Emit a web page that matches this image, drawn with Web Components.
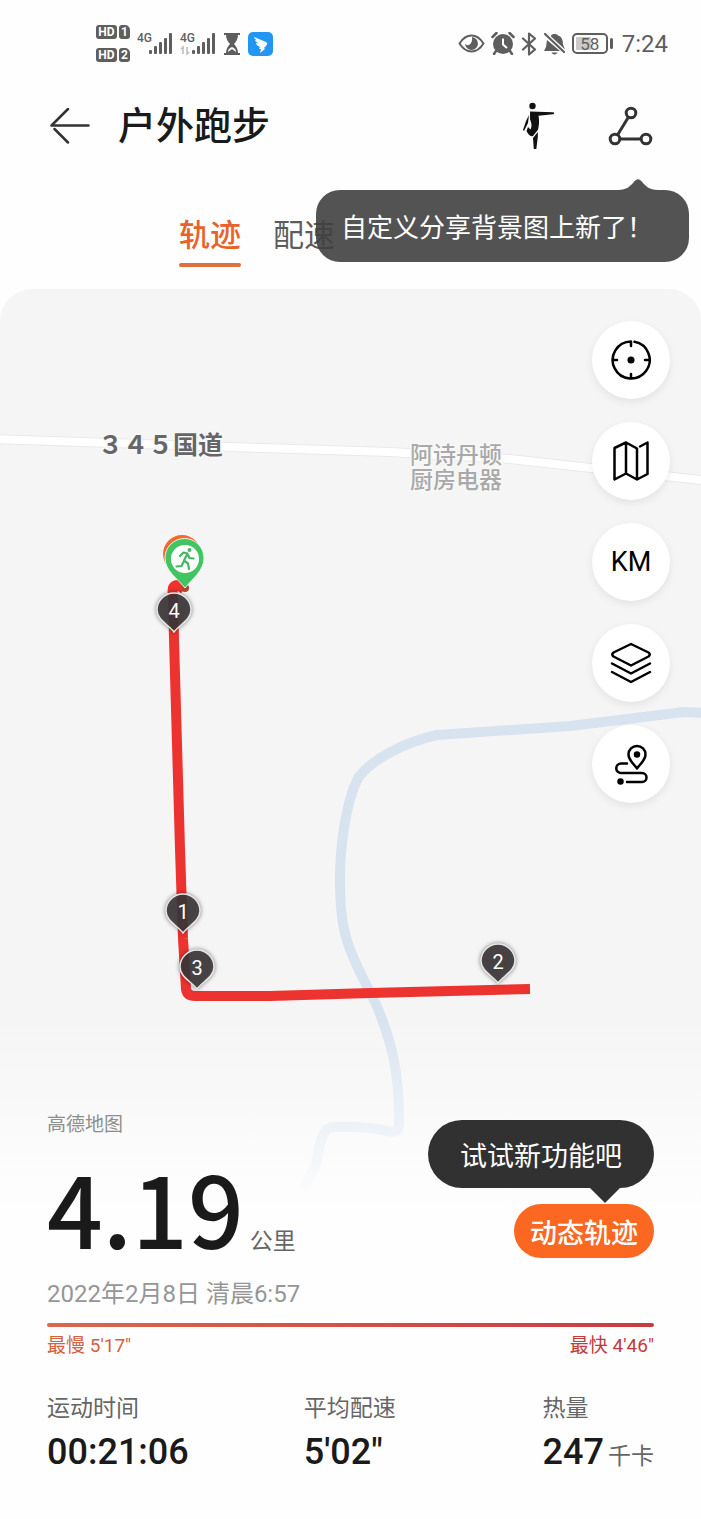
<!DOCTYPE html>
<html lang="zh-CN">
<head>
<meta charset="utf-8">
<meta name="viewport" content="width=device-width, initial-scale=1">
<title>户外跑步</title>
<style>
  body {
    margin: 0;
    background: #fefefe;
    color: #1a1a1a;
    font-family: Roboto, "Noto Sans CJK SC", sans-serif;
  }
</style>
</head>
<body>

<run-page>
  <status-bar slot="status" time="7:24" battery="58"></status-bar>
  <page-header slot="header">
    户外跑步
    <hint-bubble slot="hint">自定义分享背景图上新了&#xFF01;</hint-bubble>
  </page-header>
  <tab-bar slot="tabs" tabs="轨迹,配速" active="轨迹"></tab-bar>
  <track-map slot="map">
    <map-pin label="1" style="--x:183px; --y:644px"></map-pin>
    <map-pin label="2" style="--x:498px; --y:694px"></map-pin>
    <map-pin label="3" style="--x:197px; --y:700px"></map-pin>
    <map-pin label="4" style="--x:174px; --y:343px"></map-pin>
  </track-map>
  <map-tools slot="tools"></map-tools>
  <run-summary slot="summary">
    <span slot="source">高德地图</span>
    <span slot="distance">4.19</span>
    <span slot="unit">公里</span>
    <span slot="date">2022年2月8日 清晨6:57</span>
    <span slot="slow">最慢 5'17"</span>
    <span slot="fast">最快 4'46"</span>
    <run-stat slot="stats" label="运动时间" value="00:21:06"></run-stat>
    <run-stat slot="stats" label="平均配速" value="5'02&quot;"></run-stat>
    <run-stat slot="stats" label="热量" value="247" unit="千卡"></run-stat>
  </run-summary>
</run-page>

<script>
class RunPage extends HTMLElement {
  constructor() {
    super();
    this.attachShadow({mode: 'open'}).innerHTML = `
      <style>
        :host { display: block; }
        .stage {
          display: grid;
          grid-template-columns: minmax(0, 1fr);
          margin-top: 17px;
        }
        .map, .content { grid-area: 1 / 1; }
        .content {
          position: relative;
          display: flex;
          flex-direction: column;
          gap: 306px;
          padding: 32px 0 47px;
        }
      </style>
      <slot name="status"></slot>
      <slot name="header"></slot>
      <slot name="tabs"></slot>
      <main class="stage">
        <div class="map"><slot name="map"></slot></div>
        <div class="content">
          <slot name="tools"></slot>
          <slot name="summary"></slot>
        </div>
      </main>`;
  }
}

class StatusBar extends HTMLElement {
  constructor() {
    super();
    const signal = `
      <rect x="12" y="18" width="3" height="4" rx="1"/>
      <rect x="17" y="14" width="3" height="8" rx="1"/>
      <rect x="22" y="10" width="3" height="12" rx="1"/>
      <rect x="27" y="6" width="3" height="16" rx="1"/>
      <rect x="32" y="1" width="3" height="21" rx="1"/>`;
    this.attachShadow({mode: 'open'}).innerHTML = `
      <style>
        :host {
          display: flex;
          align-items: center;
          justify-content: space-between;
          height: 87px;
          padding: 0 33px 0 96px;
          color: #5e5e5e;
        }
        .group { display: flex; align-items: center; gap: 7px; }
        .right { gap: 6px; }
        .sims { display: grid; grid-template-columns: 21px 11px; gap: 9px 2px; }
        .sims span {
          height: 14px;
          border-radius: 3px;
          background: #5e5e5e;
          color: #fff;
          font: bold 12px/14px Roboto, sans-serif;
          text-align: center;
        }
        .sims .sim { border-radius: 3px 5px 3px 3px; }
        svg { display: block; fill: currentColor; }
        text { font: 500 12px Roboto, sans-serif; }
        .battery { display: flex; align-items: center; gap: 2px; }
        .cell {
          box-sizing: border-box;
          width: 36px;
          height: 21px;
          border: 2px solid #5e5e5e;
          border-radius: 5px;
          background: linear-gradient(90deg, #c9c9c9 55%, #fff 55%) content-box;
          padding: 2px;
          font-size: 17px;
          line-height: 14px;
          text-align: center;
        }
        .nub { width: 3px; height: 11px; border-radius: 2px; background: #5e5e5e; }
        time { font-size: 24px; line-height: 28px; margin-left: 3px; }
      </style>
      <div class="group">
        <div class="sims">
          <span>HD</span><span class="sim">1</span>
          <span>HD</span><span class="sim">2</span>
        </div>
        <svg width="36" height="24" viewBox="0 0 36 24"><text x="0" y="10">4G</text>${signal}</svg>
        <svg width="36" height="24" viewBox="0 0 36 24"><text x="0" y="10">4G</text>${signal}
          <path d="M3 22v-7l-2 2M7 15v7l2-2" fill="none" stroke="#bbb" stroke-width="1.5"/></svg>
        <svg width="18" height="22" viewBox="0 0 18 22">
          <path d="M1 0h16v2h-2c0 4-2 7-4 9 2 2 4 5 4 9h2v2H1v-2h2c0-4 2-7 4-9-2-2-4-5-4-9H1z"/>
          <path d="M5 19c0-3 2-4 4-5 2 1 4 2 4 5l-4-3z" fill="#fff"/></svg>
        <svg width="25" height="24" viewBox="0 0 25 24">
          <rect width="25" height="24" rx="5" fill="#2196f3"/>
          <path d="M6 5l12 5c2 1 1 3 0 4l-2 2 1 1-5 4 1-4h-2l1-2c-3-1-4-3-4-4l3 .5C8 10 7 9 7 8l2 .5C7 7 6 6 6 5z" fill="#fff"/></svg>
      </div>
      <div class="group right">
        <svg width="27" height="19" viewBox="0 0 27 19">
          <path d="M1.500 9.500C5 4 9 1.500 13.500 1.500S22 4 25.500 9.500C22 15 18 17.500 13.500 17.500S5 15 1.500 9.500z" fill="none" stroke="currentColor" stroke-width="2"/>
          <path d="M14 3a6.500 6.500 0 1 1-7 7c3 3 8 0 7-7z"/></svg>
        <svg width="24" height="23" viewBox="0 0 24 23">
          <circle cx="12" cy="12" r="10"/>
          <path d="M1.500 5l4-4M22.500 5l-4-4M5 19l-2 3M19 19l2 3" stroke="currentColor" stroke-width="2.500" stroke-linecap="round"/>
          <path d="M12 6.500v6l4 3.500" fill="none" stroke="#fff" stroke-width="2"/></svg>
        <svg width="16" height="24" viewBox="0 0 16 24">
          <path d="M2 6.500l12 11-6 5V1.500l6 5-12 11" fill="none" stroke="currentColor" stroke-width="2.200" stroke-linejoin="round" stroke-linecap="round"/></svg>
        <svg width="23" height="24" viewBox="0 0 23 24">
          <path d="M8 3.500c1-2 6-2 7 0 4 1 5 5 5 9l2 5-14-13zM4 8l13 11H1l2-4zM8.500 20.500h6c-1 2.500-5 2.500-6 0z"/>
          <path d="M2 2l19 18" stroke="currentColor" stroke-width="2.200" stroke-linecap="round"/></svg>
        <div class="battery"><div class="cell">${this.getAttribute('battery')}</div><div class="nub"></div></div>
        <time>${this.getAttribute('time')}</time>
      </div>`;
  }
}

class PageHeader extends HTMLElement {
  constructor() {
    super();
    this.attachShadow({mode: 'open'}).innerHTML = `
      <style>
        :host {
          position: relative;
          display: flex;
          align-items: center;
          height: 78px;
          padding: 0 48px 0 50px;
        }
        h1 {
          flex: 1;
          margin: 0 0 0 28px;
          font-size: 38px;
          font-weight: 500;
          line-height: 48px;
        }
        button { display: block; padding: 0; border: 0; background: none; color: inherit; }
        .share { margin-left: 54px; }
        svg { display: block; }
        .hint {
          position: absolute;
          z-index: 1;
          top: 103px;
          right: 12px;
        }
      </style>
      <button aria-label="返回">
        <svg width="40" height="36" viewBox="0 0 40 36" fill="none" stroke="#333" stroke-width="2.500" stroke-linecap="round" stroke-linejoin="round">
          <path d="M18 1L1.500 17.500H38.500M4.500 21L18 34.500"/></svg>
      </button>
      <h1><slot></slot></h1>
      <button aria-label="动作">
        <svg width="32" height="48" viewBox="0 0 32 48" fill="#111">
          <circle cx="10.500" cy="4" r="3.200"/>
          <path d="M8 9.500l23 .8c1.500 0 1.500 1.900 0 2l-14.500 1.400c1 5 .5 10-.5 14L11 34c-3 1-5-2-6.500-5l1.500-4 2.500 2.500c2-4 .5-7-.5-10.500z"/>
          <path d="M7 13l-1 8-4 8-1-1 3-9z"/>
          <path d="M15.800 30v5l-1.500 12h-2.500l-.8-11z"/></svg>
      </button>
      <button class="share" aria-label="分享">
        <svg width="45" height="40" viewBox="0 0 45 40" fill="none" stroke="#333" stroke-width="3">
          <circle cx="23" cy="7" r="4.800"/><circle cx="7" cy="33" r="4.800"/><circle cx="38" cy="33" r="4.800"/>
          <path d="M20.500 11L9.500 29M12 33h21"/></svg>
      </button>
      <div class="hint"><slot name="hint"></slot></div>`;
  }
}

class HintBubble extends HTMLElement {
  constructor() {
    super();
    this.attachShadow({mode: 'open'}).innerHTML = `
      <style>
        :host {
          position: relative;
          display: block;
          padding: 20px 36px 16px 25px;
          border-radius: 24px;
          background: rgba(64, 64, 64, .9);
          color: #fff;
          font-size: 26px;
          line-height: 36px;
          white-space: nowrap;
        }
        svg { position: absolute; right: 31px; bottom: 100%; }
      </style>
      <svg width="40" height="11" viewBox="0 0 40 11" fill="#535353">
        <path d="M0 11c9 0 12-4 15-7 4-5 6-5 10 0 3 3 6 7 15 7z"/></svg>
      <slot></slot>`;
  }
}

class TabBar extends HTMLElement {
  constructor() {
    super();
    const active = this.getAttribute('active');
    const tabs = this.getAttribute('tabs').split(',').map(name => `
      <button role="tab" aria-selected="${name === active}">${name}</button>`).join('');
    this.attachShadow({mode: 'open'}).innerHTML = `
      <style>
        :host {
          display: flex;
          gap: 32px;
          padding: 48px 0 0 179px;
        }
        button {
          padding: 0 0 5px;
          border: 0;
          background: none;
          color: #5c5c5c;
          font: 400 31px/46px Roboto, "Noto Sans CJK SC", sans-serif;
        }
        button::after {
          content: "";
          display: block;
          height: 4px;
          margin-top: 4px;
          border-radius: 2px;
        }
        [aria-selected=true] { color: #e8622a; font-weight: 500; }
        [aria-selected=true]::after { background: #e2703a; }
      </style>
      ${tabs}`;
  }
}

class TrackMap extends HTMLElement {
  constructor() {
    super();
    this.attachShadow({mode: 'open'}).innerHTML = `
      <style>
        :host {
          position: relative;
          display: block;
          height: 920px;
          overflow: hidden;
          border-radius: 32px 32px 0 0;
          background: #f6f5f6;
        }
        svg { display: block; width: 100%; height: 100%; }
        .fade {
          position: absolute;
          inset: 730px 0 0;
          background: linear-gradient(rgba(254, 254, 254, 0), rgba(254, 254, 254, .6) 60%, #fefefe);
        }
        .road, .place { font-family: Roboto, "Noto Sans CJK SC", sans-serif; stroke: #f8f8f8; stroke-width: 3px; paint-order: stroke; }
        .road { font-size: 25px; font-weight: 700; fill: #666; }
        .place { font-size: 23px; font-weight: 500; fill: #a9a9a9; }
      </style>
      <svg viewBox="0 0 701 920" preserveAspectRatio="xMinYMin slice" fill="none">
        <!-- road -->
        <path d="M-5 150L200 157 390 163 510 170 600 180 710 192" stroke="#e9e9e9" stroke-width="10"/>
        <path d="M-5 150L200 157 390 163 510 170 600 180 710 192" stroke="#fff" stroke-width="8"/>
        <!-- river -->
        <path d="M710 424L684 423 570 437 437 446C405 453 372 470 358 489 345 515 340 560 340 590 340 615 342 635 346 648 353 675 370 700 378 720 390 750 400 780 399 838Q398 843 390 843 370 837 332 838 324 840 321 852L315 878 303 900" stroke="#d8e3f0" stroke-width="10" stroke-linejoin="round"/>
        <text class="road" x="98" y="165">&#xFF13;&#xFF14;&#xFF15;国道</text>
        <text class="place" x="410" y="174">阿诗丹顿</text>
        <text class="place" x="410" y="199">厨房电器</text>
        <!-- track -->
        <path d="M184 300L178 296Q171 296 173 305L174 350 180 560 183 650 186 700Q187 707 195 707L270 707 370 704 530 700" stroke="#ec332f" stroke-width="10" stroke-linejoin="round"/>
        <circle cx="185" cy="299" r="4" fill="#b8442c"/>
        <!-- finish and start -->
        <path d="M182 294C175 286 163 277 163 265a19 19 0 0 1 38 0C201 277 189 286 182 294z" fill="#f3692f"/>
        <path d="M185 299C178 290 165 282 165 269a19.500 19.500 0 0 1 39 0C204 282 192 290 185 299z" fill="#43c462" stroke="#e9f6ec" stroke-width="1"/>
        <circle cx="185" cy="270" r="14" fill="#fff"/>
        <circle cx="189.500" cy="261" r="2" fill="#43b861"/>
        <path d="M180 267l3.500-3.500 4 1-3.500 7 4 3 1 5.500M184 272l-2.500 5-5 .5M187.500 265l2 4 4 .5" stroke="#43b861" stroke-width="2.200" stroke-linecap="round" stroke-linejoin="round"/>
      </svg>
      <slot></slot>
      <div class="fade"></div>`;
  }
}

/* --x / --y is the point on the map the tip stands on */
class MapPin extends HTMLElement {
  constructor() {
    super();
    this.attachShadow({mode: 'open'}).innerHTML = `
      <style>
        :host {
          position: absolute;
          left: calc(var(--x) - 20px);
          top: calc(var(--y) - 42px);
          display: grid;
          width: 40px;
          height: 46px;
        }
        svg, span { grid-area: 1 / 1; }
        svg { filter: drop-shadow(0 0 2px rgba(0, 0, 0, .5)); }
        span { color: #fff; font-size: 20px; line-height: 42px; text-align: center; z-index: 1; }
      </style>
      <svg width="40" height="46" viewBox="0 0 40 46">
        <path d="M20 42C15 35 3 30 3 20a17 17 0 0 1 34 0C37 30 25 35 20 42z" fill="#3c3839" fill-opacity=".88" stroke="#e8e8e8" stroke-width="1.500"/></svg>
      <span>${this.getAttribute('label')}</span>`;
  }
}

class MapTools extends HTMLElement {
  constructor() {
    super();
    this.attachShadow({mode: 'open'}).innerHTML = `
      <style>
        :host {
          display: flex;
          flex-direction: column;
          align-items: flex-end;
          gap: 23px;
          padding-right: 31px;
        }
        button {
          display: grid;
          place-items: center;
          width: 78px;
          height: 78px;
          padding: 0;
          border: 0;
          border-radius: 50%;
          background: #fff;
          box-shadow: 0 3px 8px rgba(0, 0, 0, .08);
          color: #000;
          font: 400 27px/32px Roboto, sans-serif;
        }
        svg {
          fill: none;
          stroke: #000;
          stroke-width: 2.500;
          stroke-linecap: round;
          stroke-linejoin: round;
        }
      </style>
      <button aria-label="定位">
        <svg width="40" height="40" viewBox="0 0 40 40">
          <path d="M23.500 1.800A18.500 18.500 0 1 1 20 1.500V6M20 34v4M2 20h4M34 20h4"/>
          <circle cx="20" cy="20" r="2.300" fill="#000"/></svg>
      </button>
      <button aria-label="地图类型">
        <svg width="40" height="42" viewBox="0 0 40 42">
          <path d="M3.500 8L15 2.500 26 8.500V39.500L15 33.500 3.500 39.500zM15 2.500v31M26 39.500L36.500 34V2.500L29 6.500"/></svg>
      </button>
      <button>KM</button>
      <button aria-label="图层">
        <svg width="42" height="42" viewBox="0 0 42 42">
          <path d="M21 2L38.500 10.500Q41 12.500 38.500 14.500L21 23.500 3.500 14.500Q1 12.500 3.500 10.500zM2 21.500l19 10 19-10M2 30l19 10 19-10"/></svg>
      </button>
      <button aria-label="轨迹">
        <svg width="36" height="42" viewBox="0 0 36 42">
          <path d="M24 25.500C20 20 15.500 17 15.500 11.500a8.500 8.500 0 0 1 17 0C32.500 17 28 20 24 25.500zM14 20.500H8a4.500 4.500 0 0 0 0 9.500h21a4.500 4.500 0 0 1 0 9H14"/>
          <circle cx="24" cy="11.500" r="2" fill="#000"/><circle cx="7.500" cy="38.500" r="2" fill="#000"/></svg>
      </button>`;
  }
}

class RunSummary extends HTMLElement {
  constructor() {
    super();
    this.attachShadow({mode: 'open'}).innerHTML = `
      <style>
        :host { display: block; padding: 0 47px; }
        .top { display: flex; justify-content: space-between; }
        .source { color: #8e8e8e; font-size: 19px; line-height: 32px; }
        .distance {
          display: flex;
          align-items: baseline;
          gap: 6px;
          height: 104px;
          margin-top: 13px;
          line-height: 104px;
        }
        .distance strong { font-family: "Noto Sans CJK SC", sans-serif; font-size: 98px; font-weight: 500; }
        .distance span { color: #666; font-size: 23px; }
        .date { margin-top: 22px; color: #969696; font-size: 24px; line-height: 28px; }
        .action {
          display: flex;
          flex-direction: column;
          align-items: flex-end;
          gap: 16px;
          padding-top: 11px;
        }
        .tip, button {
          border: 0;
          color: #fff;
          font: 400 27px/38px Roboto, "Noto Sans CJK SC", sans-serif;
        }
        .tip {
          position: relative;
          padding: 18px 32px 12px;
          border-radius: 34px;
          background: #323132;
        }
        .tip::after {
          content: "";
          position: absolute;
          top: 100%;
          right: 34px;
          border: solid transparent;
          border-width: 15px 15px 0;
          border-top-color: #323132;
        }
        button { padding: 11px 16px 5px; border-radius: 27px; background: #fc6721; font-weight: 500; }
        .bar {
          height: 4px;
          margin-top: 15px;
          border-radius: 2px;
          background: linear-gradient(90deg, #d9694a, #c83c40);
        }
        .pace {
          display: flex;
          justify-content: space-between;
          margin-top: 6px;
          font-size: 19px;
          line-height: 26px;
        }
        .slow { color: #d4603f; }
        .fast { color: #c23a3c; }
        .stats {
          display: grid;
          grid-template-columns: 257fr 239fr 111fr;
          margin-top: 36px;
        }
      </style>
      <div class="top">
        <div>
          <div class="source"><slot name="source"></slot></div>
          <div class="distance"><strong><slot name="distance"></slot></strong><span><slot name="unit"></slot></span></div>
          <div class="date"><slot name="date"></slot></div>
        </div>
        <div class="action">
          <div class="tip">试试新功能吧</div>
          <button>动态轨迹</button>
        </div>
      </div>
      <div class="bar"></div>
      <div class="pace">
        <span class="slow"><slot name="slow"></slot></span>
        <span class="fast"><slot name="fast"></slot></span>
      </div>
      <div class="stats"><slot name="stats"></slot></div>`;
  }
}

class RunStat extends HTMLElement {
  constructor() {
    super();
    const unit = this.getAttribute('unit');
    this.attachShadow({mode: 'open'}).innerHTML = `
      <style>
        :host { display: block; white-space: nowrap; }
        .label { color: #666; font-size: 23px; line-height: 28px; }
        .value { display: flex; align-items: baseline; gap: 4px; height: 40px; margin-top: 9px; line-height: 40px; }
        strong { font-size: 36px; font-weight: 500; }
        .value span { color: #666; font-size: 23px; }
      </style>
      <div class="label">${this.getAttribute('label')}</div>
      <div class="value"><strong>${this.getAttribute('value')}</strong>${unit ? `<span>${unit}</span>` : ''}</div>`;
  }
}

customElements.define('run-page', RunPage);
customElements.define('status-bar', StatusBar);
customElements.define('page-header', PageHeader);
customElements.define('hint-bubble', HintBubble);
customElements.define('tab-bar', TabBar);
customElements.define('track-map', TrackMap);
customElements.define('map-pin', MapPin);
customElements.define('map-tools', MapTools);
customElements.define('run-summary', RunSummary);
customElements.define('run-stat', RunStat);
</script>
</body>
</html>
